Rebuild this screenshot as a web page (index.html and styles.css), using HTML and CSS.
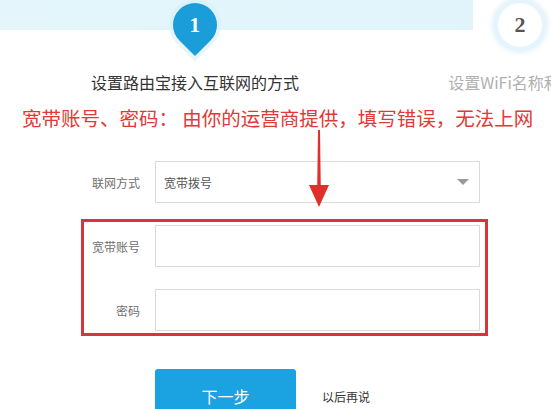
FILE: index.html
```html
<!DOCTYPE html>
<html lang="zh-CN">
<head>
  <meta charset="UTF-8" />
  <meta name="viewport" content="width=device-width, initial-scale=1.0"/>
  <title>设置路由宝</title>
  <link rel="stylesheet" href="styles.css">
</head>
<body>
  <div class="steps">
    <div class="step step-current">
      <div class="marker">
        <div class="pin"><span>1</span></div>
      </div>
      <div class="step-title">设置路由宝接入互联网的方式</div>
    </div>
    <div class="step step-next">
      <div class="marker">
        <div class="circle">2</div>
      </div>
      <div class="step-title">设置WiFi名称和密码</div>
    </div>
  </div>

  <p class="note">宽带账号、密码： 由你的运营商提供，填写错误，无法上网</p>

  <!-- red annotation arrow, drawn over the form -->
  <svg class="arrow" width="22" height="78" viewBox="0 0 22 78">
    <polygon points="10,0 12,0 12.8,58 9.2,58" fill="#e0302c"/>
    <polygon points="1,55 21,55 11,77" fill="#e0302c"/>
  </svg>

  <div class="form">
    <div class="row">
      <label class="label">联网方式</label>
      <div class="field select">
        <span>宽带拨号</span>
        <i class="caret"></i>
      </div>
    </div>

    <div class="highlight">
      <div class="row">
        <label class="label">宽带账号</label>
        <input class="field" type="text">
      </div>
      <div class="row">
        <label class="label">密码</label>
        <input class="field" type="password">
      </div>
    </div>

    <div class="actions">
      <button class="next">下一步</button>
      <a class="later">以后再说</a>
    </div>
  </div>
</body>
</html>
```

FILE: styles.css
```css
body {
  margin: 0;
  width: 551px;
  height: 409px;
  overflow: hidden;
  position: relative;
  background: #fff;
  font-family: "Noto Sans CJK SC", "Noto Sans", sans-serif;
  color: #333;
}

.steps {
  display: flex;
  padding-top: 3px;
  background: linear-gradient(90deg, #e4f6fc, #e1f4fb) no-repeat;
  background-size: 473px 30px;
}

.step {
  display: flex;
  flex-direction: column;
  align-items: center;
  flex-shrink: 0;
}

.step-current { width: 250px; margin-left: 70px; }
.step-next { width: 200px; margin-left: 100px; }

.marker {
  height: 54px;
}

.pin {
  width: 44px;
  height: 44px;
  background: #1a9dd9;
  border-radius: 50% 50% 0 50%;
  transform: rotate(45deg);
  box-shadow: 0 0 0 4px rgba(215, 240, 250, 0.6);
  display: flex;
  align-items: center;
  justify-content: center;
}

.pin span {
  transform: rotate(-45deg);
  color: #fff;
  font-family: "Liberation Serif", serif;
  font-weight: bold;
  font-size: 21px;
}

.circle {
  width: 44px;
  height: 44px;
  border-radius: 50%;
  background: #fff;
  box-shadow: 0 0 0 3px #e6f5fb, 0 0 6px 5px #d6eef8;
  display: flex;
  align-items: center;
  justify-content: center;
  color: #555;
  font-family: "Liberation Serif", serif;
  font-weight: bold;
  font-size: 22px;
}

.step-title {
  margin-top: 15px;
  font-size: 16px;
  line-height: 20px;
  white-space: nowrap;
}

.step-next .step-title {
  color: #b0b0b0;
}

.note {
  margin: 14px 0 0;
  padding-left: 22px;
  font-size: 19.5px;
  line-height: 24px;
  color: #de3a36;
  white-space: nowrap;
}

.arrow {
  position: absolute;
  left: 308px;
  top: 130px;
}

.form {
  margin: 31px 0 0 81px;
}

.row {
  display: flex;
  align-items: center;
}

.label {
  width: 59px;
  margin-right: 15px;
  text-align: right;
  font-size: 12px;
  color: #707070;
}

.field {
  box-sizing: border-box;
  width: 325px;
  height: 42px;
  margin: 0;
  border: 1px solid #dadada;
  background: #fff;
  font: inherit;
}

.select {
  display: flex;
  align-items: center;
  justify-content: space-between;
  padding: 0 10px 0 8px;
  font-size: 12px;
  color: #555;
}

.caret {
  width: 0;
  height: 0;
  border-left: 6px solid transparent;
  border-right: 6px solid transparent;
  border-top: 6px solid #999;
}

.highlight {
  box-sizing: border-box;
  width: 407px;
  margin-top: 16px;
  padding: 3px 5px 2px 0;
  border: 3px solid #d4363b;
  display: flex;
  flex-direction: column;
  gap: 22px;
}

.highlight .label {
  width: 56px;
}

.actions {
  display: flex;
  align-items: center;
  margin: 33px 0 0 74px;
}

.next {
  width: 141px;
  height: 54px;
  border: none;
  border-radius: 3px;
  background: #1ba2e1;
  color: #fff;
  font: inherit;
  font-size: 16px;
  padding: 0;
}

.later {
  margin-left: 26px;
  font-size: 12px;
  color: #333;
}
```
